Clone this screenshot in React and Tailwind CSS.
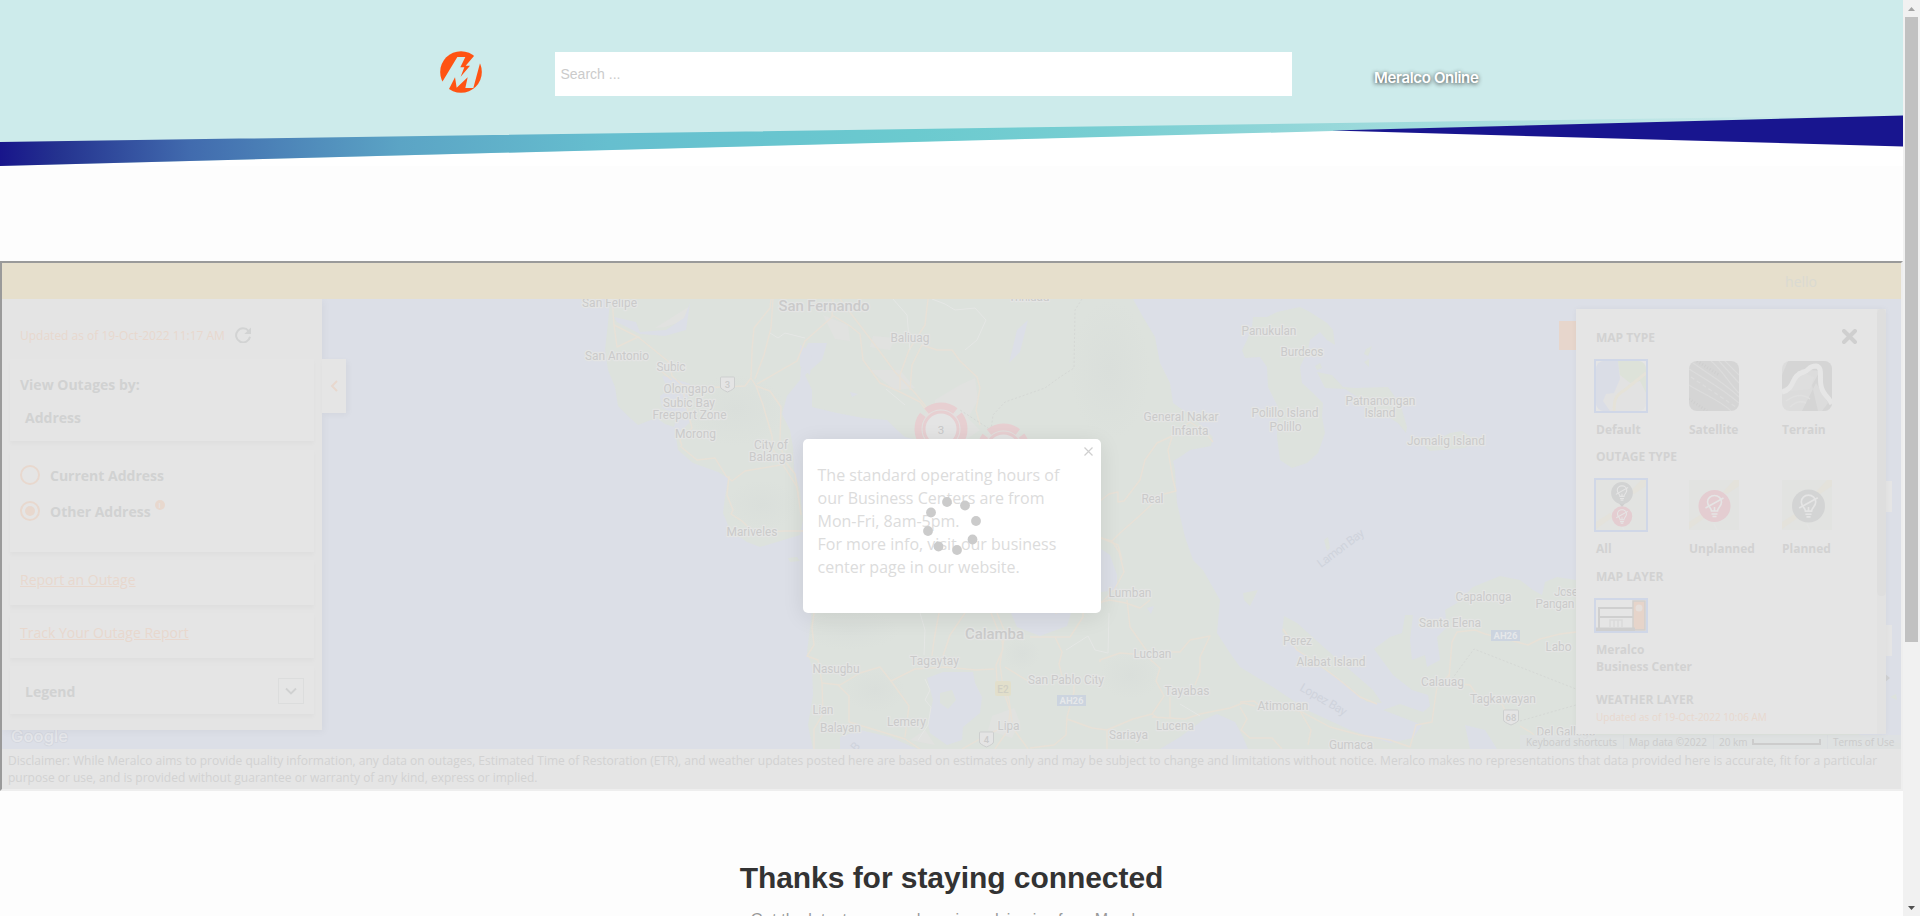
import React from "react";

const LAND = "#dde2dd";
const WATER = "#dcdfe7";

const labels = [
  ["San Felipe", 609.5, 307, 55],
  ["San Fernando", 824, 311, 91, 15],
  ["Trinidad", 1029, 301, 41],
  ["Baliuag", 910, 342, 39],
  ["San Antonio", 617, 360, 64],
  ["Subic", 671, 371, 29],
  ["Olongapo", 689, 393, 51],
  ["Subic Bay", 689, 407, 52],
  ["Freeport Zone", 689.5, 419, 74],
  ["Morong", 695.5, 438, 41],
  ["City of", 771, 449, 34],
  ["Balanga", 770.5, 461, 43],
  ["Mariveles", 752, 536, 51],
  ["Panukulan", 1269, 335, 55],
  ["Burdeos", 1302, 356, 43],
  ["General Nakar", 1181, 421, 75],
  ["Infanta", 1190, 435, 37],
  ["Polillo Island", 1285, 417, 67],
  ["Polillo", 1285.5, 431, 32],
  ["Patnanongan", 1380.5, 405, 70],
  ["Island", 1380, 417, 31],
  ["Jomalig Island", 1446, 445, 78],
  ["Real", 1152.5, 503, 22],
  ["Lumban", 1130, 597, 43],
  ["Calamba", 994.5, 639, 59, 15],
  ["Nasugbu", 836, 673, 47],
  ["Tagaytay", 934.5, 665, 49],
  ["Lian", 823, 714, 21],
  ["Balayan", 840.5, 732, 41],
  ["Lemery", 906.5, 726, 39],
  ["Lipa", 1008.5, 730, 22],
  ["San Pablo City", 1066, 684, 76],
  ["Lucban", 1152.5, 658, 38],
  ["Tayabas", 1187, 695, 45],
  ["Lucena", 1175, 730, 38],
  ["Sariaya", 1128.5, 739, 39],
  ["Atimonan", 1283, 710, 51],
  ["Gumaca", 1351, 749, 44],
  ["Perez", 1297.5, 645, 29],
  ["Alabat Island", 1331, 666, 69],
  ["Capalonga", 1483.5, 601, 56],
  ["Santa Elena", 1450, 627, 62],
  ["Jose", 1566, 596, 24],
  ["Pangan", 1555, 608, 39],
  ["Labo", 1558.5, 651, 26],
  ["Calauag", 1442.5, 686, 43],
  ["Tagkawayan", 1503, 703, 66],
  ["Del Gallego", 1566, 736, 59],
];

const roads = [
  "M612 299L614 325L617 347L638 337L669 362L672 376L682 385L700 388L745 386L751 378",
  "M614 325L640 338M669 362L660 370L672 380",
  "M771 299L770 308L754 328L752 350L751 378L756 386L763 405L772 436L773 450L785 468L797 487L801 515",
  "M773 299L771 328L764 355L755 379M756 386L770 391L781 407L780 440L784 460L795 474L799 500",
  "M757 384L797 361L805 341L832 317L833 299",
  "M832 315L850 326L860 334L863 360L880 383L900 392L920 402L932 418",
  "M840 299L852 315L875 345L895 372L915 393L928 409",
  "M928 299L925 325L909 350L900 375L900 390M910 390L912 365L922 345L937 350L952 350L960 361L977 377L980 388L976 410L980 425",
  "M680 446L697 460L715 458L726 476L732 481L745 471L780 465M729 476L727 495L733 510L731 514L742 521L752 531L766 532L785 531L803 531",
  "M682 385L685 400L692 428L680 440L682 446",
  "M1100 501L1109 494L1118 492L1118 502L1124 501L1140 480L1145 460L1157 443L1170 437L1190 422L1205 432L1213 442",
  "M1172 437L1168 450L1173 480L1176 491L1160 495L1150 506L1137 518L1120 533L1112 541L1101 538M1112 541L1119 552L1124 572L1114 590L1101 603",
  "M1101 538L1118 545L1122 560",
  "M814 613L812 628L814 645L807 656L818 660L822 683L840 685L860 673L880 667L891 681L915 669L945 667L976 670L994 669",
  "M838 685L849 696L849 722L869 728L905 739L920 749M822 683L823 714L814 729L814 749M891 681L909 706L905 737",
  "M939 613L934 640L932 656M965 613L950 635L943 656",
  "M991 613L1002 640L1003 649L996 665L997 680L1004 692L1010 711L1008 730L995 749M997 613L1005 632L1000 664L1002 680L1009 700L1013 728L1028 749",
  "M1005 667L1028 681M1001 728L980 739L962 749M1030 637L1070 637L1083 617L1083 613M1055 637L1062 652L1059 664L1063 680",
  "M1074 676L1074 692L1067 717L1066 735L1054 745L1030 748M1067 719L1092 728L1107 730L1133 719L1152 714L1164 696L1156 681L1160 668L1145 655L1120 653L1100 660L1100 662",
  "M1107 730L1107 749M1152 717L1185 719L1200 714L1230 708L1243 703L1255 706M1152 714L1158 718M1170 697L1170 718",
  "M1127 600L1130 627L1144 647L1150 655M1160 652L1180 652L1190 640L1210 636L1200 657L1200 672L1195 685",
  "M1240 707L1247 719L1241 730L1250 738L1272 738L1282 749M1240 702L1254 701L1260 706L1300 711L1330 727L1360 735L1390 740L1410 747L1416 725L1432 722L1434 707L1437 687L1450 674",
  "M1300 711L1311 730L1308 745M1283 629L1297 650L1320 665L1342 682L1360 697L1377 704",
  "M1449 678L1452 642L1457 632L1475 630L1485 634L1510 640L1528 645L1540 639L1560 634L1576 632",
  "M1452 683L1470 685L1479 698L1502 704L1508 716M1520 726L1532 733L1540 742",
  "M1055 613L1110 600L1126 603L1140 608L1150 600",
];

function Shield({ x, y, w, t, fill = "#e4e4e4" }) {
  return (
    <g>
      <path
        d={`M${x - w / 2 + 1} ${y - 7}H${x + w / 2 - 1}Q${x + w / 2} ${y - 7} ${x + w / 2} ${y - 6}V${y + 3}Q${x + w / 2} ${y + 5} ${x} ${y + 8}Q${x - w / 2} ${y + 5} ${x - w / 2} ${y + 3}V${y - 6}Q${x - w / 2} ${y - 7} ${x - w / 2 + 1} ${y - 7}Z`}
        fill={fill}
        stroke="#cdcfcf"
      />
      <text x={x} y={y + 3.5} textAnchor="middle" fontSize="9.5" fontWeight="500" fill="#cbcbcb">{t}</text>
    </g>
  );
}

function Highway({ x, y, t }) {
  return (
    <g>
      <rect x={x} y={y} width="29" height="11" fill="#ccd4df" />
      <text x={x + 14.5} y={y + 9} textAnchor="middle" fontSize="9.5" fontWeight="700" fill="#e6e8ea">{t}</text>
    </g>
  );
}

function Cluster({ x, y, n }) {
  return (
    <g>
      <circle cx={x} cy={y} r="22" fill="#e4e0e0" fillOpacity=".6" />
      <circle cx={x} cy={y} r="23" fill="none" stroke="#e7cfd1" strokeWidth="7" strokeDasharray="31 5.13" strokeDashoffset="-20.6" transform={`rotate(-2 ${x} ${y})`} />
      <circle cx={x} cy={y} r="17" fill="#e4e4e4" stroke="#e7cfd1" strokeWidth="3" />
      <text x={x} y={y + 4.5} textAnchor="middle" fontFamily="Roboto" fontWeight="400" fontSize="11.5" fill="#c8c8c8">{n}</text>
    </g>
  );
}

function MapCanvas() {
  return (
    <svg className="block h-full w-full" viewBox="2 299 1899 450" fontFamily="Roboto, sans-serif">
      <defs>
        <radialGradient id="hill">
          <stop offset="0" stopColor="#dadfdb" />
          <stop offset="1" stopColor="#dadfdb" stopOpacity="0" />
        </radialGradient>
      </defs>
      <rect x="2" y="299" width="1899" height="450" fill={WATER} />
      <g fill={LAND}>
        <path d="M610 299L608 323L605 350L608 370L615 387L618 406L630 418L638 425L648 421L657 418L665 424L674 427L677 415L662 408L660 396L668 390L662 376L672 378L690 384L686 408L690 422L681 431L676 437L678 450L693 463L718 472L728 478L725 497L723 513L730 530L747 542L760 547L777 542L800 535L803 520L800 490L794 470L793 447L790 430L782 414L787 396L800 380L802 357L808 343L827 343L822 360L805 375L812 390L812 407L837 413L863 418L887 420L897 430L905 437L940 445L960 520L870 560L812 598L811 620L807 652L812 667L813 695L808 725L813 749L840 749L840 737L860 730L890 737L917 749L1160 749L1180 737L1203 720L1217 714L1235 722L1243 737L1248 749H1901V743L1870 740L1576 590L1576 580L1557 577L1545 582L1542 595L1533 590L1520 580L1500 576L1473 587L1457 603L1445 610L1447 627L1437 637L1440 660L1427 667L1425 655L1412 660L1410 640L1413 615L1405 615L1402 633L1390 637L1374 649L1393 675L1412 690L1428 695L1430 706L1423 712L1400 704L1383 710L1422 725L1413 738L1390 743L1350 730L1307 710L1273 687L1240 667L1230 653L1217 633L1220 600L1203 570L1193 560L1185 537L1177 503L1175 470L1173 461L1180 457L1190 450L1211 446L1213 437L1193 417L1173 403L1170 383L1160 363L1155 337L1143 317L1133 299Z" />
        <path d="M1252 327L1253 317L1267 317L1277 312L1300 307L1310 312L1327 323L1333 330L1335 345L1327 340L1320 332L1310 340L1308 350L1300 367L1302 383L1313 393L1323 403L1322 417L1325 433L1318 453L1307 463L1292 468L1280 460L1277 437L1278 407L1268 387L1267 367L1260 357L1245 358L1242 350L1247 340Z" />
        <path d="M1317 372L1332 375L1343 387L1355 388L1388 387L1395 397L1400 403L1407 427L1406 433L1398 423L1385 415L1370 413L1362 400L1345 389L1325 388ZM1366 349L1372 346L1368 356L1364 354ZM1364 362L1369 359L1369 367ZM1425 447L1450 433L1462 431L1475 440L1465 448L1430 451ZM1315 366L1320 363L1322 368L1317 370ZM1324 540L1328 537L1330 548L1327 551Z" />
        <path d="M1284 616L1297 623L1327 650L1350 670L1373 690L1382 703L1367 702L1340 680L1320 667L1297 650L1282 632ZM1243 593L1258 590L1250 606L1244 600ZM788 558L797 557L800 561L790 562ZM1890 697L1896 694L1897 700Z" />
      </g>
      <g fill="url(#hill)">
        <ellipse cx="762" cy="505" rx="36" ry="25" />
        <ellipse cx="736" cy="410" rx="50" ry="36" />
        <ellipse cx="1022" cy="654" rx="18" ry="16" />
        <ellipse cx="1130" cy="675" rx="30" ry="24" />
        <ellipse cx="1110" cy="370" rx="40" ry="70" />
        <ellipse cx="875" cy="690" rx="30" ry="22" />
        <ellipse cx="850" cy="630" rx="50" ry="20" />
      </g>
      <g fill="#e1e2e0">
        <path d="M823 315L848 325L850 341L835 339ZM873 336L895 338L890 350L870 347ZM935 400L960 385L975 378L978 400L968 418L980 430L955 447L935 430ZM655 328L690 306L686 320L665 327ZM992 716L1014 708L1020 722L1012 738L988 730ZM870 370L900 370L915 388L895 390ZM910 740L925 730L935 745Z" />
      </g>
      <g fill={WATER}>
        <path d="M1011 613L1071 613L1067 626L1040 636L1017 627ZM927 678L943 672L973 672L975 683L982 697L980 713L963 727L962 740L947 745L930 733L928 723L933 700ZM1101 549L1110 555L1117 575L1117 590L1101 592ZM1147 608L1154 606L1151 614ZM1465 725L1485 730L1497 749L1470 749ZM1017 330L1028 320L1020 352L1009 363ZM800 345L812 352L810 375L800 366ZM614 317L636 322L640 332L666 330L684 318L690 303L686 330L665 336L640 334L617 322ZM850 392L858 394L852 397Z" />
      </g>
      <path d="M940 693L952 690L956 700L948 709L940 703Z" fill={LAND} />
      <g fill="none" stroke="#e8e1d7" strokeWidth="1.4" strokeLinejoin="round">
        {roads.map((d) => <path key={d} d={d} />)}
      </g>
      <g fill="none" stroke="#e5e7e5" strokeWidth="1">
        <path d="M893 299L907 315L910 350M932 299L945 304L955 310L975 308L986 320L977 340L965 350M770 333L778 338L785 333L805 338M886 389L905 405M920 613L925 630L924 655M925 679L930 690L925 700L931 707L928 725L918 740M1066 650L1088 636L1095 650L1108 653L1109 613M1180 704L1200 716" />
      </g>
      <g fill="none" stroke="#d5d8d5" strokeWidth="1" strokeDasharray="2 2">
        <path d="M1082 299L1075 310L1074 368L1060 377L1045 388L1005 402L993 415L991 430L960 410M1452 679L1474 649L1576 689M1520 721L1576 705" />
      </g>

      <Cluster x={941} y={429} n="3" />
      <Cluster x={1003.5} y={450} n="2" />

      <Shield x={727.5} y={384} w={14} t="3" />
      <Shield x={986.5} y={739} w={14} t="4" />
      <Shield x={1511} y={717} w={15} t="68" />
      <rect x="995" y="681" width="16" height="15" rx="2" fill="#e2dfcb" />
      <text x="1003" y="693" textAnchor="middle" fontSize="10" fontWeight="500" fill="#d0cfc4">E2</text>
      <Highway x={1057} y={695} t="AH26" />
      <Highway x={1491} y={630} t="AH26" />

      <g fill="#cacaca" stroke="#e4e5e4" strokeWidth="2.5" strokeLinejoin="round" paintOrder="stroke">
        {labels.map(([t, x, y, w, size]) => (
          <text key={t} x={x - w / 2} y={y} fontSize={size || 12} fontWeight={size ? 500 : 400} textLength={w}>{t}</text>
        ))}
      </g>
      <g fontSize="12" fill="#cfd3dc">
        <text x="1321" y="568" textLength="55" transform="rotate(-37 1321 568)">Lamon Bay</text>
        <text x="1299" y="690" textLength="52" transform="rotate(30 1299 690)">Lopez Bay</text>
        <text x="856" y="752" transform="rotate(-50 856 752)">B</text>
      </g>
      <text x="11" y="741.5" fontFamily="Inter, sans-serif" fontSize="16.500" fontWeight="500" textLength="57" fill="#e5e6ea" stroke="#d3d6de" strokeWidth="1.6" paintOrder="stroke">Google</text>
      <path d="M1884 673L1890 678L1884 683" fill="#d0d1d3" />
    </svg>
  );
}

function Card({ className = "", children }) {
  return (
    <div className={`w-[304px] bg-[#e5e5e5] pl-[10px] text-[14px] leading-[20px] font-bold text-[#d1d2d2] shadow-[0_3px_4px_rgba(0,0,0,0.025)] ${className}`}>
      {children}
    </div>
  );
}

function Radio({ checked, children }) {
  return (
    <div className="flex h-5 items-center gap-[10px]">
      <span className="flex size-5 items-center justify-center rounded-full border-2 border-[#e8d8ce]">
        {checked && <span className="size-[10px] rounded-full bg-[#e8d8ce]" />}
      </span>
      <span className="mt-[2px]">{children}</span>
    </div>
  );
}

function OutagePanel() {
  return (
    <aside className="absolute top-0 left-0 h-[431px] w-[320px] bg-[#e4e4e4] px-2 shadow-[2px_2px_8px_rgba(0,0,0,0.04)]">
      <div className="flex h-[60px] items-start pt-[27px] pl-[10px]">
        <span className="w-[215px] text-[12px] leading-[20px] text-[#e8d8ce] whitespace-nowrap">Updated as of 19-Oct-2022 11:17 AM</span>
        <svg className="mt-px size-4" viewBox="0 0 16 16">
          <path d="M13.6 4A7 7 0 1 0 15 9.7" fill="none" stroke="#d2d3d3" strokeWidth="2" />
          <path d="M16 .5V7H9.3Z" fill="#d2d3d3" />
        </svg>
      </div>
      <div className="flex flex-col">
        <Card className="h-[82px] pt-4">
          <div>View Outages by:</div>
          <div className="mt-[13px] pl-[5px]">Address</div>
        </Card>
        <Card className="mt-[9px] h-[102px] pt-[15px]">
          <Radio>Current Address</Radio>
          <div className="mt-4 flex">
            <Radio checked>Other Address</Radio>
            <span className="-mt-px ml-1 flex size-[10px] items-center justify-center rounded-full bg-[#e8d8ce] text-[7px] leading-none text-[#e5e5e5]">i</span>
          </div>
        </Card>
        <Card className="mt-2 h-[45px] pt-[10px]">
          <a className="font-normal text-[#e8d8ce] underline">Report an Outage</a>
        </Card>
        <Card className="mt-2 h-[45px] pt-[10px]">
          <a className="font-normal text-[#e8d8ce] underline">Track Your Outage Report</a>
        </Card>
        <Card className="mt-2 flex h-12 items-start justify-between pr-[10px]">
          <span className="mt-4 ml-[5px]">Legend</span>
          <span className="mt-3 flex size-[26px] items-center justify-center border border-[#dcdddd]">
            <svg className="size-3" viewBox="0 0 12 12"><path d="M1 3.5L6 8.5L11 3.5" fill="none" stroke="#d0d1d1" strokeWidth="1.8" /></svg>
          </span>
        </Card>
      </div>
      <div className="absolute top-[60px] left-[320px] flex h-[54px] w-6 items-center justify-center bg-[#e5e5e5] shadow-[2px_2px_6px_rgba(0,0,0,0.04)]">
        <svg className="h-3 w-2" viewBox="0 0 8 12"><path d="M7 1L2 6L7 11" fill="none" stroke="#e8d8ce" strokeWidth="2" /></svg>
      </div>
    </aside>
  );
}

function Tile({ selected, children, h = "h-[54px]" }) {
  return <div className={`${h} w-[54px] border-2 ${selected ? "border-[#d0d7e7]" : "border-transparent"}`}>{children}</div>;
}

function Bulb({ x, y, s, fill }) {
  return (
    <g transform={`translate(${x} ${y}) scale(${s})`}>
      <circle r="16" fill={fill} />
      <g fill="none" stroke="#e5e5e5" strokeWidth="1.6">
        <path d="M-3 5C-3 2-7 0-7-4A7 6.5 0 0 1 7-4C7 0 3 2 3 5Z" />
        <path d="M-9 2L9-8M-3 8H3M-2 10.5H2M0 5V1" />
      </g>
    </g>
  );
}

function OutageThumb({ children }) {
  return (
    <svg className="block size-[50px]" viewBox="0 0 50 50">
      <rect width="50" height="50" fill="#e2e3e1" />
      <path d="M34 12L45 0H50V6L38 14ZM0 42L14 33L17 37L0 49Z" fill="#e4e2db" />
      <path d="M25 44L28 50" stroke="#e5e5e5" />
      {children}
    </svg>
  );
}

function Heading({ className, children }) {
  return <h3 className={`h-[18px] pl-[2px] text-[12px] leading-[20px] font-bold text-[#d2d2d2] ${className}`}>{children}</h3>;
}

function Row({ className, children }) {
  return <div className={`grid grid-cols-[93px_93px_93px] ${className}`}>{children}</div>;
}

function Captions({ items }) {
  return (
    <Row className="mt-[7px] h-[18px] pl-[2px] text-[12px] leading-[20px] font-bold text-[#d2d2d2]">
      {items.map((t) => <span key={t}>{t}</span>)}
    </Row>
  );
}

function LayersPanel() {
  return (
    <aside className="absolute top-[10px] left-[1574px] flex h-[425px] w-[310px] bg-[#e5e5e5] shadow-[0_0_6px_rgba(0,0,0,0.04)]">
      <div className="w-[301px] pl-[18px]">
        <div className="flex h-[50px] items-start justify-between pr-5">
          <Heading className="mt-[19px]">MAP TYPE</Heading>
          <svg className="mt-5 size-[15px]" viewBox="0 0 15 15"><path d="M2 2L13 13M13 2L2 13" stroke="#cfcfcf" strokeWidth="4" strokeLinecap="round" /></svg>
        </div>
        <Row>
          <Tile selected>
            <svg className="block size-[50px] rounded-lg" viewBox="0 0 50 50">
              <rect width="50" height="50" fill="#e2e2e2" />
              <path d="M0 0H22L24 18L18 32L10 33L7 40L14 50H0Z" fill="#dadde6" />
              <path d="M22 0H50V32L44 20L34 22L24 14Z" fill="#dde2d9" />
              <path d="M18 50C18 34 22 34 30 28L50 12" fill="none" stroke="#e5e2d8" strokeWidth="3" />
            </svg>
          </Tile>
          <Tile>
            <svg className="block size-[50px] rounded-lg" viewBox="0 0 50 50">
              <rect width="50" height="50" fill="#d5d5d5" />
              <g fill="none" stroke="#dcdcdc" strokeWidth="1.2">
                <path d="M4 2C18 12 36 22 50 36M0 8C16 18 34 28 50 42M0 24C16 34 32 40 42 50M22 0C34 10 40 22 50 32M36 0L50 14M30 0L50 22" />
                <path d="M2 16L50 48" strokeDasharray="4 3" />
                <path d="M8 0L30 14M0 38L18 50" stroke="#cfcfcf" strokeDasharray="1 2" strokeWidth="3" />
              </g>
            </svg>
          </Tile>
          <Tile>
            <svg className="block size-[50px] rounded-lg" viewBox="0 0 50 50">
              <rect width="50" height="50" fill="#dcdcdc" />
              <path d="M6 0H50V50H40L46 42L34 22L20 50H36L30 24L38 10L20 8L8 24L0 28V14Z" fill="#d5d5d5" />
              <path d="M16 10L32 16L28 28L8 30Z" fill="#dedede" />
              <path d="M4 40Q18 30 28 38M8 46Q16 38 24 42" fill="none" stroke="#e0e0e0" strokeWidth="1.5" />
              <path d="M0 31C14 28 8 14 22 11C28 9 26 5 34 5C42 6 36 20 40 28C42 34 48 38 50 43" fill="none" stroke="#e6e6e6" strokeWidth="5" />
            </svg>
          </Tile>
        </Row>
        <Captions items={["Default", "Satellite", "Terrain"]} />
        <Heading className="mt-[9px]">OUTAGE TYPE</Heading>
        <Row className="mt-[13px]">
          <Tile selected>
            <OutageThumb>
              <path d="M20 20L26 27L32 20Z" fill="#cfcfcf" />
              <Bulb x={26} y={13} s={0.68} fill="#d2d3d3" />
              <Bulb x={26} y={36.5} s={0.64} fill="#e4cdd1" />
            </OutageThumb>
          </Tile>
          <Tile><OutageThumb><Bulb x={25.5} y={26} s={1} fill="#e4cdd1" /></OutageThumb></Tile>
          <Tile><OutageThumb><Bulb x={26.5} y={26} s={1.03} fill="#d3d4d4" /></OutageThumb></Tile>
        </Row>
        <Captions items={["All", "Unplanned", "Planned"]} />
        <Heading className="mt-[10px]">MAP LAYER</Heading>
        <div className="mt-[13px]">
          <Tile selected h="h-[35px]">
            <svg className="block h-[31px] w-[50px]" viewBox="0 0 50 31">
              <path d="M3 28V8H37M3 17H37" fill="none" stroke="#cfcfcf" strokeWidth="2" />
              <rect x="37" y="1" width="12" height="29" fill="#e6d4ca" stroke="#d2cfcd" strokeWidth="1.5" />
              <circle cx="43" cy="8" r="3.5" fill="#e6dfdb" />
              <path d="M14 27V20H26V27M18 20V27M22 20V27" fill="none" stroke="#dadada" strokeWidth="1.5" />
              <path d="M0 27.500H39V31H0Z" fill="#cfcfcf" />
            </svg>
          </Tile>
        </div>
        <p className="mt-2 pl-[2px] text-[12px] leading-[17px] font-bold text-[#d2d2d2]">Meralco<br />Business Center</p>
        <Heading className="mt-[15px]">WEATHER LAYER</Heading>
        <p className="mt-[2px] pl-[2px] text-[10px] leading-[14px] text-[#e8d8ce]">Updated as of 19-Oct-2022 10:06 AM</p>
      </div>
      <div className="w-[9px] bg-[#e2e2e2]">
        <div className="h-[287px] rounded-full bg-[#dedede]" />
      </div>
    </aside>
  );
}

function MapCredits() {
  return (
    <div className="absolute right-0 bottom-0 flex h-[14px] items-center bg-[#dfe1e2]/80 text-[10px] leading-[14px] whitespace-nowrap text-[#cbcbcb]">
      <span className="w-[103px] pl-[6px]">Keyboard shortcuts</span>
      <span className="w-[90px] border-l border-[#dadde0] pl-[5px]">Map data ©2022</span>
      <span className="flex w-[114px] items-center gap-1 border-l border-[#dadde0] pl-[5px]">
        20 km
        <span className="h-[6px] w-[69px] border-2 border-t-0 border-[#cccccc]" />
      </span>
      <span className="w-[74px] border-l border-[#dadde0] pl-[5px]">Terms of Use</span>
    </div>
  );
}

const dots = [[947, 502], [965, 505.5], [976, 521], [972.5, 539.5], [957, 550], [938.5, 546.5], [928, 531], [931, 512.5]];

function HoursModal() {
  return (
    <div className="absolute top-[140px] left-[801px] h-[174px] w-[298px] rounded-[5px] bg-white pt-[24.500px] pl-[14.500px] text-[16px] leading-[23px] font-normal text-[#dcdcdc] shadow-[0_4px_22px_rgba(0,0,0,0.09)]">
      <p className="whitespace-nowrap">
        The standard operating hours of<br />our Business Centers are from<br />Mon-Fri, 8am-5pm.<br />For more info, visit our business<br />center page in our website.
      </p>
      <svg className="absolute top-2 right-2 size-[9px]" viewBox="0 0 9 9"><path d="M.5.5L8.500 8.500M8.500.5L.5 8.500" stroke="#cfcfcf" strokeWidth="1.2" /></svg>
      <svg className="absolute top-0 left-0 h-[174px] w-[298px]" viewBox="803 439 298 174">
        {dots.map(([x, y]) => <circle key={x} cx={x} cy={y} r="4.900" fill="#cbcbcb" />)}
      </svg>
    </div>
  );
}

function Header() {
  return (
    <header className="relative h-[166px] bg-white">
      <svg className="absolute inset-0 h-[166px] w-[1903px]" viewBox="0 0 1903 166">
        <defs>
          <linearGradient id="band" x1="0" x2="1903" y1="0" y2="0" gradientUnits="userSpaceOnUse">
            <stop offset="0" stopColor="#18158b" />
            <stop offset=".03" stopColor="#24328f" />
            <stop offset=".1" stopColor="#416bae" />
            <stop offset=".21" stopColor="#5ba4c5" />
            <stop offset=".32" stopColor="#66bfcf" />
            <stop offset=".48" stopColor="#6bcacf" />
            <stop offset=".58" stopColor="#78ced2" />
            <stop offset=".7" stopColor="#97d8da" />
            <stop offset=".88" stopColor="#c0e6e6" />
            <stop offset="1" stopColor="#cdebeb" />
          </linearGradient>
        </defs>
        <path d="M0 0H1903V116L1332 130.500L0 166Z" fill="#cdebeb" />
        <path d="M0 142L1903 115V116.500L1332 131L0 166Z" fill="url(#band)" />
        <path d="M1332 130.500L1903 115.500V146.500Z" fill="#18158f" />
      </svg>
      <div className="relative flex">
        <svg className="mt-[51px] ml-[440px] size-[42px]" viewBox="120 93 126 126">
          <circle cx="183" cy="156" r="62.500" fill="#ff5313" />
          <path d="M172 111H196L181 142H193L182 170L210 137H197L222 108L232 96L256 120L240 130L220 204H196L203 172L170 203L165 172L147 207L138 219L114 198L128 184Z" fill="#cdebeb" />
        </svg>
        <div className="mt-[52px] ml-[73px] h-11 w-[737px] bg-white pl-[5.500px] font-['Liberation_Sans',sans-serif] text-[14px] leading-[44px] text-[#cbcbcb]">Search ...</div>
        <a className="mt-[67px] ml-[82px] font-[Inter,sans-serif] text-[15px] leading-[22px] font-semibold tracking-[-0.35px] whitespace-nowrap text-white [text-shadow:0_1px_4px_#333]">Meralco Online</a>
      </div>
    </header>
  );
}

export default function App() {
  return (
    <div className="flex h-[916px] w-[1920px] overflow-hidden bg-[#fdfdfd] font-['Open_Sans',sans-serif]">
      <main className="w-[1903px] shrink-0">
        <Header />
        <section className="mt-[95px] h-[530px] border-2 border-t-[#9a9a9a] border-r-[#eeeeee] border-b-[#eeeeee] border-l-[#9a9a9a]">
          <div className="flex h-9 items-center justify-end bg-[#e6dfcc] pt-px pr-[84px] text-[14px] text-[#dadad2]">hello</div>
          <div className="relative h-[450px] overflow-hidden">
            <MapCanvas />
            <div className="absolute top-[22px] left-[1557px] h-[29px] w-[17px] bg-[#e7d6cc]" />
            <div className="absolute top-[182px] left-[1884px] h-[31px] w-[6px] bg-[#e5e5e5]" />
            <div className="absolute top-[326px] left-[1884px] h-[31px] w-[6px] bg-[#e5e5e5]" />
            <OutagePanel />
            <MapCredits />
            <LayersPanel />
            <HoursModal />
          </div>
          <p className="h-10 bg-[#e5e5e5] px-[6px] pt-[3px] text-[12px] leading-[17px] text-[#d2d2d2]">
            Disclaimer: While Meralco aims to provide quality information, any data on outages, Estimated Time of Restoration (ETR), and weather updates posted here are based on estimates only and may be subject to change and limitations without notice. Meralco makes no representations that data provided here is accurate, fit for a particular purpose or use, and is provided without guarantee or warranty of any kind, express or implied.
          </p>
        </section>
        <section className="h-[125px] overflow-hidden pt-[67px] text-center font-['Liberation_Sans',sans-serif]">
          <h2 className="text-[30px] leading-[40px] font-bold tracking-[-0.05px] text-[#333]">Thanks for staying connected</h2>
          <p className="mt-[12px] text-[16px] leading-[20px] tracking-[0.07px] text-[#999]">Get the latest news and service advisories from Meralco</p>
        </section>
      </main>
      <div className="flex h-full w-[17px] flex-col items-center justify-between bg-[#f1f1f1]">
        <div className="flex flex-col items-center">
          <svg className="h-[17px] w-[9px]" viewBox="0 0 9 17"><path d="M1 11L4.500 7L8 11Z" fill="#a3a3a3" /></svg>
          <div className="h-[625px] w-[13px] bg-[#c1c1c1]" />
        </div>
        <svg className="h-[17px] w-[9px]" viewBox="0 0 9 17"><path d="M1 7L4.500 11L8 7Z" fill="#505050" /></svg>
      </div>
    </div>
  );
}
